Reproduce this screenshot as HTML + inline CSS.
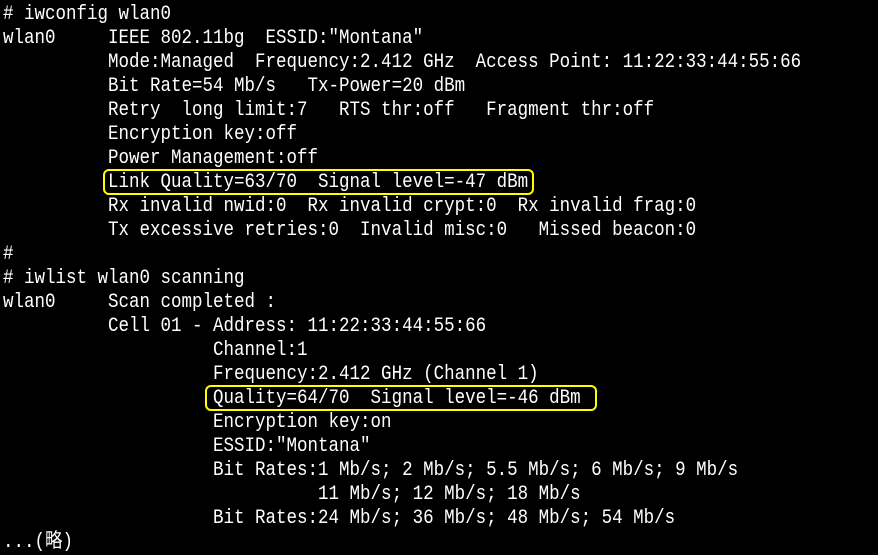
<!DOCTYPE html>
<html><head><meta charset="utf-8"><style>
html,body{margin:0;padding:0;background:#000;}
body{width:878px;height:553px;overflow:hidden;position:relative;}
pre{position:absolute;left:3px;top:3px;margin:0;color:#fff;font-family:"Liberation Mono","Noto Sans CJK JP",monospace;font-size:20px;line-height:24px;transform:scaleX(0.875);transform-origin:0 0;}
.box{position:absolute;border:2px solid #ffff00;border-radius:6px;box-sizing:border-box;}
</style></head><body>
<pre># iwconfig wlan0
wlan0     IEEE 802.11bg  ESSID:"Montana"
          Mode:Managed  Frequency:2.412 GHz  Access Point: 11:22:33:44:55:66
          Bit Rate=54 Mb/s   Tx-Power=20 dBm
          Retry  long limit:7   RTS thr:off   Fragment thr:off
          Encryption key:off
          Power Management:off
          Link Quality=63/70  Signal level=-47 dBm
          Rx invalid nwid:0  Rx invalid crypt:0  Rx invalid frag:0
          Tx excessive retries:0  Invalid misc:0   Missed beacon:0
#
# iwlist wlan0 scanning
wlan0     Scan completed :
          Cell 01 - Address: 11:22:33:44:55:66
                    Channel:1
                    Frequency:2.412 GHz (Channel 1)
                    Quality=64/70  Signal level=-46 dBm
                    Encryption key:on
                    ESSID:"Montana"
                    Bit Rates:1 Mb/s; 2 Mb/s; 5.5 Mb/s; 6 Mb/s; 9 Mb/s
                              11 Mb/s; 12 Mb/s; 18 Mb/s
                    Bit Rates:24 Mb/s; 36 Mb/s; 48 Mb/s; 54 Mb/s
...(略)</pre>
<div class="box" style="left:103px;top:169px;width:431px;height:26px;"></div>
<div class="box" style="left:205px;top:385px;width:392px;height:26px;"></div>
</body></html>
